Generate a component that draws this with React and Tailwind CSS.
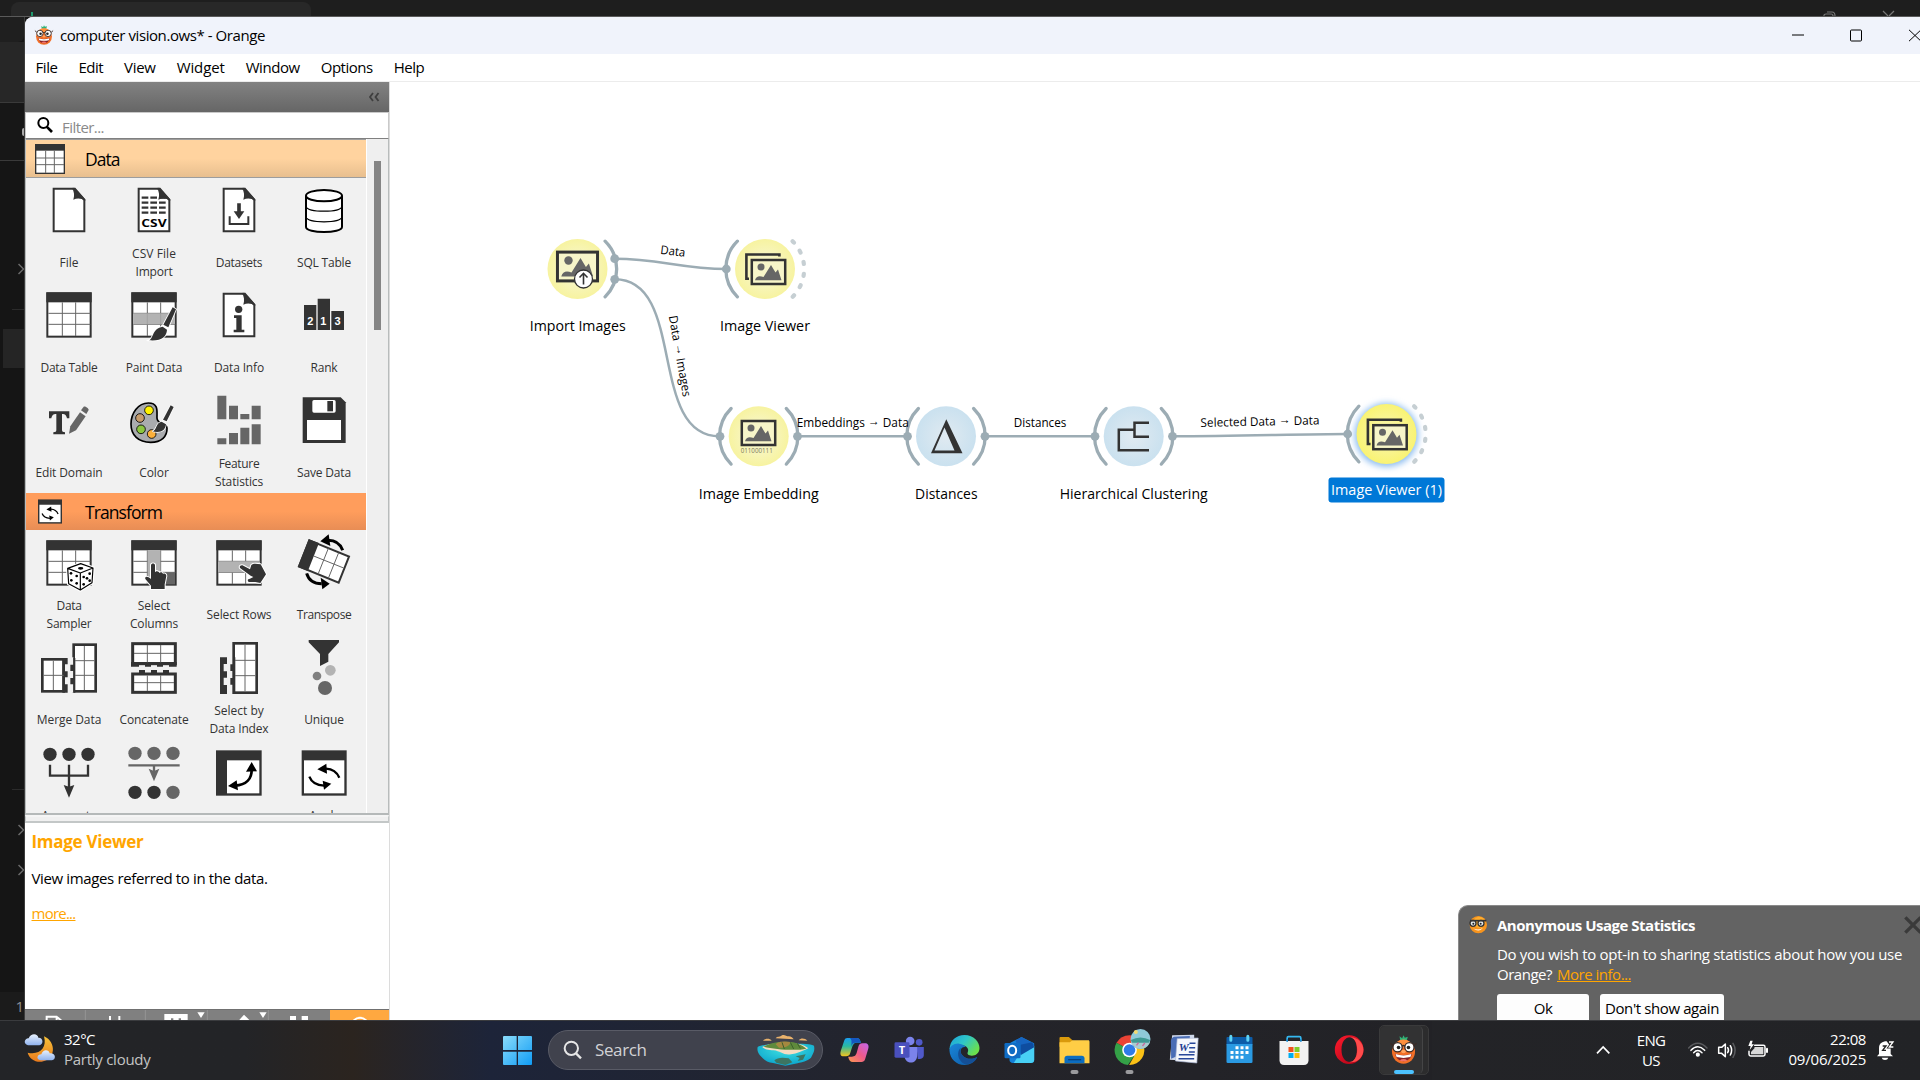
import { useLayoutEffect, useRef, useState } from "react";

// Text run whose letter spacing is tuned so that it spans `w` pixels.
function T({ w, className = "", children }) {
  const ref = useRef(null);
  const [ls, setLs] = useState(0);
  useLayoutEffect(() => {
    const natural = ref.current.getBoundingClientRect().width;
    setLs((w - natural) / String(children).length);
  }, [w, children]);
  return (
    <span ref={ref} className={"inline-block whitespace-nowrap " + className} style={{ letterSpacing: ls }}>
      {children}
    </span>
  );
}

const D = "#333333";
const G = "#666666";

function Icon({ x, y, children }) {
  return (
    <svg viewBox={`${x} ${y} 240 180`} className="mt-[2px] h-[60px] w-[80px] shrink-0">
      {children}
    </svg>
  );
}

function Doc({ x = 0, y = 0, children }) {
  return (
    <>
      <g transform={`translate(${x} ${y})`}>
        <path d="M101 56H162L193 90V184H101Z" fill="#fff" stroke={D} strokeWidth="6" />
        <path d="M155 54C163 64 164 76 160 89C172 83 185 85 196 92V88L166 53Z" fill={D} />
      </g>
      {children}
    </>
  );
}

function Table({ x = 0, y = 0, children }) {
  return (
    <>
      <g transform={`translate(${x} ${y})`}>
        <rect x="82" y="370" width="130" height="130" fill="#fff" stroke={D} strokeWidth="6" />
        <rect x="79" y="367" width="136" height="30" fill={D} />
        <path d="M127 397V498M167 397V498M85 430H211M85 463H211" stroke={G} strokeWidth="3" />
      </g>
      {children}
    </>
  );
}

const Brush = () => (
  <>
    <path d="M458 412L468 418L445 472L430 464Z" fill={D} stroke="#fff" strokeWidth="5" paintOrder="stroke" />
    <path d="M428 470L441 479C440 500 425 514 387 511C402 504 396 475 428 470Z" fill={D} stroke="#fff" strokeWidth="5" paintOrder="stroke" />
  </>
);

const Cycle = () => (
  <>
    <path d="M868 875C875 893 890 901 912 902" fill="none" stroke="#000" strokeWidth="7" />
    <path d="M908 887L934 896L912 914Z" fill="#000" />
    <path d="M958 878C950 860 938 852 918 851" fill="none" stroke="#000" strokeWidth="7" />
    <path d="M919 836L892 853L921 866Z" fill="#000" />
  </>
);

const dataItems = [
  { l: [["File", 19]], i: <Icon x={27} y={30}><Doc /></Icon> },
  {
    l: [["CSV File", 44], ["Import", 37]],
    i: (
      <Icon x={282} y={30}>
        <Doc x={255}>
          <path d="M365 83H437M365 98H437M365 113H437M365 128H437" stroke={D} strokeWidth="7" strokeDasharray="20 6" />
          <text x="364" y="171" textLength="76" lengthAdjust="spacingAndGlyphs" fontSize="34" fontWeight="700" fontFamily="Open Sans, sans-serif">CSV</text>
        </Doc>
      </Icon>
    ),
  },
  {
    l: [["Datasets", 46.5]],
    i: (
      <Icon x={537} y={30}>
        <Doc x={510}>
          <path d="M657 100V128" stroke={D} strokeWidth="11" />
          <path d="M641 124H673L657 147Z" fill={D} />
          <path d="M629 139V162H685V139" fill="none" stroke={D} strokeWidth="6" />
        </Doc>
      </Icon>
    ),
  },
  {
    l: [["SQL Table", 54]],
    i: (
      <Icon x={792} y={30}>
        <path d="M858 77V171C858 191 966 191 966 171V77" fill="#fff" />
        <g fill="none" stroke="#000">
          <ellipse cx="912" cy="77" rx="54" ry="17" strokeWidth="6" fill="#fff" />
          <path d="M858 77V171C858 191 966 191 966 171V77" strokeWidth="6" />
          <path d="M858 110C866 128 958 128 966 110M858 142C866 160 958 160 966 142" strokeWidth="3.5" />
        </g>
      </Icon>
    ),
  },
  { l: [["Data Table", 57]], i: <Icon x={27} y={345}><Table /></Icon> },
  {
    l: [["Paint Data", 56.5]],
    i: (
      <Icon x={282} y={345}>
        <Table x={255}>
          <rect x="340" y="430" width="124" height="33" fill="#b3b3b3" />
          <path d="M382 430V463M422 430V463" stroke="#999" strokeWidth="2" />
          <Brush />
        </Table>
      </Icon>
    ),
  },
  {
    l: [["Data Info", 50]],
    i: (
      <Icon x={537} y={345}>
        <Doc x={510} y={315}>
          <circle cx="656" cy="418" r="11" fill={D} />
          <path d="M642 436H665V479H673V487H641V479H649V444H642Z" fill={D} />
        </Doc>
      </Icon>
    ),
  },
  {
    l: [["Rank", 27]],
    i: (
      <Icon x={792} y={345}>
        <path d="M852 405H889V480H852ZM893 386H930V480H893ZM934 423H972V480H934Z" fill={D} />
        <g fill="#fff" fontSize="33" fontWeight="700" fontFamily="Liberation Sans, sans-serif" textAnchor="middle">
          <text x="871" y="466">2</text>
          <text x="910" y="466">1</text>
          <text x="953" y="466">3</text>
        </g>
      </Icon>
    ),
  },
  {
    l: [["Edit Domain", 67]],
    i: (
      <Icon x={27} y={660}>
        <path d="M87 724H148V745H141C139 736 136 732 126 732V780C126 785 129 786 135 787V793H100V787C107 786 109 785 109 780V732C99 732 96 736 94 745H87Z" fill={D} />
        <path d="M151 769L180 727L197 739L168 781L147 791Z" fill={G} />
        <path d="M183 721L191 710C194 707 207 715 206 720L199 732Z" fill={G} />
      </Icon>
    ),
  },
  {
    l: [["Color", 29.5]],
    i: (
      <Icon x={282} y={660}>
        <path d="M385 699C354 699 333 730 333 762C333 796 355 817 392 817C425 817 442 799 441 775C440 755 412 765 411 745C410 727 418 699 385 699Z" fill="#a9abae" stroke="#000" strokeWidth="5" />
        <g stroke="#000" strokeWidth="2.5">
          <circle cx="387" cy="721" r="13" fill="#fff200" />
          <circle cx="360" cy="744" r="13" fill="#c69c6d" />
          <circle cx="363" cy="778" r="13" fill="#8cc63f" />
          <circle cx="395" cy="792" r="13" fill="#fbb03b" />
        </g>
        <path d="M452 706L461 711L440 754L429 749Z" fill={D} stroke="#fff" strokeWidth="4" paintOrder="stroke" />
        <path d="M425 755L438 763C436 782 422 790 397 784C412 780 406 758 425 755Z" fill={D} stroke="#fff" strokeWidth="4" paintOrder="stroke" />
      </Icon>
    ),
  },
  {
    l: [["Feature", 40.7], ["Statistics", 48]],
    i: (
      <Icon x={537} y={660}>
        <path d="M592 677H619V748H592ZM627 707H654V748H627ZM661 732H688V748H661ZM695 707H722V748H695ZM592 805H619V823H592ZM627 789H654V823H627ZM661 773H688V823H661ZM695 763H722V823H695Z" fill={G} />
      </Icon>
    ),
  },
  {
    l: [["Save Data", 54]],
    i: (
      <Icon x={792} y={660}>
        <path d="M848 682H962L977 697V819H848Z" fill={D} />
        <rect x="877" y="690" width="70" height="38" rx="5" fill="#fff" />
        <rect x="922" y="693" width="17" height="31" fill={D} />
        <rect x="861" y="750" width="102" height="60" fill="#fff" />
      </Icon>
    ),
  },
];

const transformItems = [
  {
    l: [["Data", 25], ["Sampler", 45]],
    i: (
      <Icon x={27} y={141}>
        <Table y={-201}>
          <path d="M182 236L219 249L216 293L181 315L146 296L143 250Z" fill="#fff" stroke="#fff" strokeWidth="10" />
          <path d="M182 236L219 249L216 293L181 315L146 296L143 250Z M143 250L181 264L219 249M181 264V315" fill="#fff" stroke="#000" strokeWidth="3.5" strokeLinejoin="round" />
          <g fill="#000">
            <ellipse cx="182" cy="250" rx="8" ry="4" />
            <circle cx="153" cy="265" r="4" /><circle cx="170" cy="273" r="4" /><circle cx="154" cy="286" r="4" /><circle cx="170" cy="295" r="4" />
            <circle cx="191" cy="276" r="4" /><circle cx="209" cy="266" r="4" /><circle cx="201" cy="280" r="4" /><circle cx="191" cy="298" r="4" /><circle cx="209" cy="287" r="4" />
          </g>
        </Table>
      </Icon>
    ),
  },
  {
    l: [["Select", 32.5], ["Columns", 48]],
    i: (
      <Icon x={282} y={141}>
        <Table x={255} y={-201}>
          <rect x="383" y="196" width="38" height="101" fill="#b3b3b3" />
          <rect x="423" y="262" width="42" height="36" fill={G} />
          <path d="M393 241C393 234 405 234 405 241V262C408 256 417 258 418 264C422 260 428 262 429 267C434 264 439 267 439 273L434 298V312H393V302L376 282C374 274 382 272 393 282Z" fill={D} stroke="#fff" strokeWidth="6" paintOrder="stroke" />
        </Table>
      </Icon>
    ),
  },
  {
    l: [["Select Rows", 65]],
    i: (
      <Icon x={537} y={141}>
        <Table x={510} y={-201}>
          <rect x="595" y="229" width="124" height="33" fill="#b3b3b3" />
          <path d="M661 250C656 244 663 238 670 242L690 253L694 240C700 234 710 236 722 238L738 268L721 294L706 291H686C681 287 683 281 690 281L700 276L692 272Z" fill={D} stroke="#fff" strokeWidth="6" paintOrder="stroke" />
        </Table>
      </Icon>
    ),
  },
  {
    l: [["Transpose", 54.5]],
    i: (
      <Icon x={792} y={141}>
        <path d="M868 166L987 215L956 293L837 244Z" fill="#fff" stroke={D} strokeWidth="6" />
        <path d="M868 166L893 176L862 254L837 244Z" fill={D} stroke={D} strokeWidth="6" />
        <path d="M925 190L894 268M956 203L925 280M881 213L971 249" stroke={G} strokeWidth="3" />
        <path d="M968 196C960 174 945 166 924 166" fill="none" stroke="#000" strokeWidth="9" />
        <path d="M926 148L901 169L931 183Z" fill="#000" />
        <path d="M860 265C866 286 880 296 905 296" fill="none" stroke="#000" strokeWidth="9" />
        <path d="M902 278L929 296L907 313Z" fill="#000" />
      </Icon>
    ),
  },
  {
    l: [["Merge Data", 64.5]],
    i: (
      <Icon x={27} y={456}>
        <rect x="67" y="523" width="64" height="96" fill="#fff" stroke={D} strokeWidth="8" />
        <path d="M127 519H143V538H134V559H143V577H134V598H143V623H127Z" fill={D} />
        <path d="M100 527V615M71 571H131" stroke={G} strokeWidth="3" />
        <rect x="161" y="479" width="66" height="140" fill="#fff" stroke={D} strokeWidth="8" />
        <path d="M155 517H160V623H155Z" fill="#f1f1f1" />
        <path d="M160 519h6v104h-6v-25h-9v-19h9v-21h-9v-19h9z" fill={D} />
        <path d="M193 483V615M165 527H224M165 571H224" stroke={G} strokeWidth="3" />
      </Icon>
    ),
  },
  {
    l: [["Concatenate", 69]],
    i: (
      <Icon x={282} y={456}>
        <rect x="338" y="476" width="128" height="60" fill="#fff" stroke={D} strokeWidth="9" />
        <path d="M333 531H470V545H447V536H429V545H411V536H393V545H375V536H357V545H333Z" fill={D} />
        <path d="M382 480V532M422 480V532M342 505H462" stroke={G} strokeWidth="3" />
        <rect x="338" y="567" width="128" height="55" fill="#fff" stroke={D} strokeWidth="9" />
        <path d="M357 555h18v10h-18zM393 555h18v10h-18zM429 555h18v10h-18z" fill={D} />
        <path d="M382 571V618M422 571V618M342 593H462" stroke={G} strokeWidth="3" />
      </Icon>
    ),
  },
  {
    l: [["Select by", 49.5], ["Data Index", 59]],
    i: (
      <Icon x={537} y={456}>
        <path d="M600 517H621V537H611V559H621V578H611V600H621V627H600Z" fill={D} />
        <rect x="641" y="475" width="69" height="148" fill="#fff" stroke={D} strokeWidth="8" />
        <path d="M640 517h6v108h-6v-26h-9v-20h9v-21h-9v-20h9z" fill={D} />
        <path d="M675 479V619M645 526H706M645 572H706" stroke={G} strokeWidth="3" />
      </Icon>
    ),
  },
  {
    l: [["Unique", 39.5]],
    i: (
      <Icon x={792} y={456}>
        <path d="M866 465H957V472L925 507V530L900 543V507L866 472Z" fill={D} />
        <circle cx="931" cy="556" r="16" fill="#b3b3b3" />
        <circle cx="891" cy="573" r="13" fill="#808080" />
        <circle cx="915" cy="609" r="21" fill={G} />
      </Icon>
    ),
  },
  {
    l: [["Aggregate", 55], ["\u00a0", 4]],
    i: (
      <Icon x={27} y={771}>
        <g fill={D}>
          <circle cx="90" cy="808" r="20" /><circle cx="147" cy="808" r="20" /><circle cx="204" cy="808" r="20" />
          <path d="M131 900L147 905L163 900L147 938Z" />
        </g>
        <path d="M90 839V872H204V839M147 839V908" fill="none" stroke={D} strokeWidth="7" />
      </Icon>
    ),
  },
  {
    l: [],
    i: (
      <Icon x={282} y={771}>
        <g fill={G}>
          <circle cx="345" cy="805" r="20" /><circle cx="402" cy="805" r="20" /><circle cx="459" cy="805" r="20" /><circle cx="459" cy="922" r="20" />
          <path d="M386 851L402 858L418 851L402 889Z" />
        </g>
        <path d="M325 841H479M402 841V862" stroke={G} strokeWidth="7" />
        <circle cx="345" cy="922" r="20" fill={D} /><circle cx="402" cy="922" r="20" fill={D} />
      </Icon>
    ),
  },
  {
    l: [],
    i: (
      <Icon x={537} y={771}>
        <rect x="588" y="796" width="137" height="136" fill={D} />
        <rect x="621" y="826" width="97" height="99" fill="#fff" />
        <path d="M645 902C680 900 696 880 695 852" fill="none" stroke="#000" strokeWidth="8" />
        <path d="M650 886L624 903L654 916ZM678 860L695 831L711 859Z" fill="#000" />
      </Icon>
    ),
  },
  {
    l: [["Apply", 30], ["\u00a0", 4]],
    i: (
      <Icon x={792} y={771}>
        <rect x="845" y="796" width="135" height="136" fill={D} />
        <rect x="852" y="826" width="121" height="99" fill="#fff" />
        <Cycle />
      </Icon>
    ),
  },
];

function WidgetGrid({ items }) {
  return (
    <div className="grid w-[340px] grid-cols-4">
      {items.map((it, k) => (
        <div key={k} className="flex h-[105px] flex-col items-center overflow-visible">
          {it.i}
          <div className="mt-[4.5px] ml-px flex h-[36px] flex-col items-center justify-center text-[12px] leading-[17.5px] text-[#333]">
            {it.l.map(([t, w]) => (
              <T key={t} w={w}>{t}</T>
            ))}
          </div>
        </div>
      ))}
    </div>
  );
}

function Mascot({ className }) {
  return (
    <svg viewBox="0 0 80 88" className={className}>
      <path d="M28 4L36 10L40 1L44 8L53 5L50 17H30Z" fill="#2fb277" />
      <ellipse cx="40" cy="51" rx="35" ry="36" fill="#f26f27" />
      <path d="M12 38Q18 14 40 14Q62 14 68 38Z" fill="#ff8f3c" />
      <path d="M14 57Q40 66 66 57Q60 80 40 80Q20 80 14 57Z" fill="#8a2426" />
      <path d="M16 58Q40 67 64 58L61 67Q40 72 19 67Z" fill="#fff" />
      <path d="M28 77Q40 69 52 77Q40 83 28 77Z" fill="#f0726b" />
      <g fill="#fff" stroke="#3a2a26" strokeWidth="4">
        <circle cx="22" cy="37" r="14" /><circle cx="58" cy="37" r="14" />
      </g>
      <path d="M36 34Q40 30 44 34M8 32L0 25M72 32L80 25" stroke="#3a2a26" strokeWidth="4" fill="none" />
      <circle cx="25" cy="38" r="5.500" fill="#222" /><circle cx="55" cy="38" r="5.500" fill="#222" />
      <ellipse cx="40" cy="50" rx="7" ry="5" fill="#ffa25e" />
    </svg>
  );
}

function Sidebar() {
  return (
    <div className="flex w-[365px] shrink-0 flex-col border-r border-[#dcdcdc] bg-[#f1f1f1]">
      <div className="flex h-[30px] shrink-0 items-center justify-end bg-linear-to-b from-[#828282] to-[#666] pr-[9px]">
        <svg viewBox="0 0 12 10" className="h-[10px] w-[12px]" fill="none" stroke="#3f3f3f" strokeWidth="1.8">
          <path d="M5 1L2 5L5 9M10.500 1L7.500 5L10.500 9" />
        </svg>
      </div>
      <div className="flex h-[27px] shrink-0 items-center border border-[#c9c9c9] border-b-[#808080] bg-white pl-[11px]">
        <svg viewBox="0 0 48 48" className="mb-[2px] h-[16px] w-[16px]" fill="none" stroke="#000" strokeWidth="6">
          <circle cx="19" cy="18" r="15" />
          <path d="M29 29L45 45" strokeWidth="8" />
        </svg>
        <T w={42} className="mt-[3px] ml-[9px] text-[15px] leading-[20px] text-[#8a8a8a]">Filter...</T>
      </div>
      <div className="flex h-[676px] shrink-0 overflow-hidden border-r border-b-2 border-l border-[#b8bcbc] border-b-[#b5b9b9]">
        <div className="flex w-[340px] shrink-0 flex-col">
          <div className="flex h-[39px] shrink-0 items-center border-t border-b border-[#9d9d9d] bg-linear-to-b from-[#ffd39f] from-50% to-[#e8bf8f] pl-[9px]">
            <svg viewBox="0 0 90 90" className="h-[30px] w-[30px]">
              <rect x="2" y="2" width="86" height="86" fill="#fff" stroke={D} strokeWidth="4" />
              <rect width="90" height="20" fill={D} />
              <path d="M32 20V87M58 20V87M3 42H87M3 62H87" stroke={G} strokeWidth="3" />
            </svg>
            <T w={34.5} className="ml-[20px] text-[17.5px] leading-[24px]">Data</T>
          </div>
          <WidgetGrid items={dataItems} />
          <div className="flex h-[37px] shrink-0 items-center bg-linear-to-b from-[#ff9d5c] from-50% to-[#e88d55] pl-[12px]">
            <svg viewBox="845 796 135 136" className="h-[25px] w-[24px]">
              <rect x="845" y="796" width="135" height="136" fill={D} />
              <rect x="853" y="826" width="119" height="98" fill="#fff" />
              <Cycle />
            </svg>
            <T w={77} className="ml-[23px] text-[17.5px] leading-[24px]">Transform</T>
          </div>
          <WidgetGrid items={transformItems} />
        </div>
        <div className="w-[23px] shrink-0 border-l border-white bg-[#efefef] pt-[22px] pl-[7px]">
          <div className="h-[169px] w-[7px] bg-[#858585]" />
        </div>
      </div>
      <div className="h-[8px] shrink-0 border border-t-2 border-b-2 border-[#c3c7c7] border-t-[#f5f5f5] bg-[#f0f0f0]" />
      <div className="flex h-[186px] shrink-0 flex-col items-start bg-white pl-[6.5px]">
        <T w={112} className="mt-[6px] text-[17px] leading-[26px] font-bold text-[#ffa500]">Image Viewer</T>
        <T w={236} className="mt-[13px] text-[15px] leading-[20px]">View images referred to in the data.</T>
        <T w={44} className="mt-[15px] text-[15px] leading-[20px] text-[#ffa500] underline">more...</T>
      </div>
      <div className="flex h-[11px] shrink-0 overflow-hidden border-t border-[#707070] bg-[#808080]">
        <svg viewBox="75 630 915 30" className="h-[10px] w-[305px]" fill="none">
          <path d="M256 630V660M436 630V660M622 630V660M805 630V660" stroke="#949494" strokeWidth="3" />
          <path d="M140 662V650H170L185 663M170 648V662M330 648V662M358 648V662" stroke="#fff" strokeWidth="6" />
          <path d="M493 642H563V662H543V655H536V662H520V655H513V662H493ZM592 637H614L603 654ZM778 637H800L789 654ZM716 662L732 644L750 662ZM870 648H888V662H870ZM905 648H924V662H905Z" fill="#fff" />
        </svg>
        <svg viewBox="990 630 177 30" className="h-[10px] w-[59px] bg-[#ffa840]" fill="none">
          <circle cx="1080" cy="678" r="25" stroke="#fff" strokeWidth="6" />
        </svg>
      </div>
    </div>
  );
}

const LINK = "#9cacb4";

function Arc({ x, y, side = 1, dashed }) {
  const dx = 27.6 * side;
  return (
    <path
      d={`M${x + dx} ${y - 27.8}A39.200 39.200 0 0 ${side > 0 ? 1 : 0} ${x + dx} ${y + 27.8}`}
      fill="none"
      stroke={dashed ? "#c6cfd3" : LINK}
      strokeWidth={dashed ? 4.2 : 3.3}
      strokeLinecap="round"
      strokeDasharray={dashed ? "2 9.900" : undefined}
    />
  );
}

const Dot = ({ x, y }) => <circle cx={x} cy={y} r="4.4" fill={LINK} />;

// Framed landscape picture, drawn round (x, y).
function Picture({ x, y, s = 1 }) {
  return (
    <g transform={`translate(${x} ${y}) scale(${s})`}>
      <rect x="-16.700" y="-12" width="33.400" height="24" fill="#f7f5c9" stroke={D} strokeWidth="2.500" />
      <circle cx="-7.500" cy="-5" r="3.500" fill={G} />
      <path d="M-13.500 8.300C-12.500 4 -9 3.500 -5 5L2.500 -7L7 0.500L9.500 -2.500L13 8.300Z" fill={G} />
    </g>
  );
}

const Stack = ({ x, y }) => (
  <>
    <path d={`M${x - 16} ${y + 10.3}H${x - 18.6}V${y - 14}H${x + 14.4}V${y - 12}`} fill="none" stroke={D} strokeWidth="2.600" />
    <Picture x={x + 3.500} y={y + 3.500} />
  </>
);

function CT({ x, y, w, size = 15, rotate = 0, fill = "#000", children }) {
  const [from, to] = String(children).split("→");
  return (
    <text
      x={x - w / 2}
      y={y + size * 0.35}
      textLength={w}
      lengthAdjust="spacingAndGlyphs"
      fontSize={size}
      fill={fill}
      transform={`rotate(${rotate} ${x} ${y})`}
    >
      {from}
      {to && <tspan dy="-1.500">→</tspan>}
      {to && <tspan dy="1.500">{to}</tspan>}
    </text>
  );
}

function Canvas() {
  return (
    <svg viewBox="390 82 1530 938" className="h-[938px] w-[1530px]">
      <defs>
        <radialGradient id="yel"><stop offset="0" stopColor="#f8f8dc" /><stop offset="1" stopColor="#f7f3a0" /></radialGradient>
        <radialGradient id="sel"><stop offset="0" stopColor="#f8f6b8" /><stop offset="1" stopColor="#f9f373" /></radialGradient>
        <radialGradient id="blu"><stop offset="0" stopColor="#e0eaf1" /><stop offset="1" stopColor="#cae1ef" /></radialGradient>
        <filter id="glow" x="-50%" y="-50%" width="200%" height="200%"><feGaussianBlur stdDeviation="3" /></filter>
      </defs>

      <g fill="none" stroke={LINK} strokeWidth="2.500">
        <path d="M614.700 258.700C660 258.700 680 269 727 269" />
        <path d="M614.700 279.300C687 279.300 647 436.300 719.700 436.300" />
        <path d="M797.500 436.300H907.500M985 436.300H1095" />
        <path d="M1172.500 436.300C1240 436.300 1300 434 1347.500 434" />
      </g>

      <circle cx="577.500" cy="269" r="30" fill="url(#yel)" />
      <circle cx="765" cy="269" r="30" fill="url(#yel)" />
      <circle cx="758.700" cy="436.300" r="30" fill="url(#yel)" />
      <circle cx="946" cy="436.300" r="30" fill="url(#blu)" />
      <circle cx="1133.700" cy="436.300" r="30" fill="url(#blu)" />
      <circle cx="1386.500" cy="435" r="32" fill="#8dbdf0" filter="url(#glow)" />
      <circle cx="1386.500" cy="434" r="30" fill="url(#sel)" />

      <Arc x={577.5} y={269} />
      <Arc x={765} y={269} side={-1} />
      <Arc x={765} y={269} dashed />
      <Arc x={758.7} y={436.3} side={-1} />
      <Arc x={758.7} y={436.3} />
      <Arc x={946} y={436.3} side={-1} />
      <Arc x={946} y={436.3} />
      <Arc x={1133.7} y={436.3} side={-1} />
      <Arc x={1133.7} y={436.3} />
      <Arc x={1386.5} y={434} side={-1} />
      <Arc x={1386.5} y={434} dashed />

      <Dot x={614.7} y={258.7} /><Dot x={614.7} y={279.3} /><Dot x={726.3} y={269} />
      <Dot x={720} y={436.3} /><Dot x={797.5} y={436.3} /><Dot x={907.5} y={436.3} />
      <Dot x={985} y={436.3} /><Dot x={1095} y={436.3} /><Dot x={1172.5} y={436.3} /><Dot x={1347.7} y={434} />

      <Picture x={577.5} y={266.5} s={1.2} />
      <circle cx="583.500" cy="279" r="9" fill="#fff" stroke={D} strokeWidth="1.300" />
      <path d="M583.500 284.500V273.500M579.500 277.500L583.500 273.300L587.500 277.500" fill="none" stroke={D} strokeWidth="1.600" />
      <Stack x={765} y={268.5} />
      <Stack x={1386.5} y={433.7} />
      <Picture x={758.5} y={433} />
      <text x="740.700" y="452.500" textLength="32" lengthAdjust="spacingAndGlyphs" fontSize="6.500" fill="#77765a">011000111</text>
      <path fillRule="evenodd" d="M946.300 419.300L962.500 453.300H931ZM944.500 427.500L934.500 450.500H954.500Z" fill={D} />
      <path d="M1149 422.800H1134.500V436.700H1149M1134.500 429.800H1118.800V450.300H1149" fill="none" stroke={D} strokeWidth="2.500" />

      <CT x={577.7} y={325.5} w={96}>Import Images</CT>
      <CT x={765} y={325.5} w={90}>Image Viewer</CT>
      <CT x={758.7} y={493.5} w={120}>Image Embedding</CT>
      <CT x={946.3} y={493.5} w={62.5}>Distances</CT>
      <CT x={1133.7} y={493.5} w={148}>Hierarchical Clustering</CT>
      <rect x="1328.500" y="477.500" width="116" height="25" rx="3" fill="#0078d7" />
      <CT x={1386.5} y={490} w={111} fill="#fff">Image Viewer (1)</CT>

      <CT x={673} y={251} w={25} size={12} rotate={7}>Data</CT>
      <CT x={680} y={356} w={82} size={12} rotate={80}>Data → Images</CT>
      <CT x={852.7} y={422.5} w={112} size={12}>Embeddings → Data</CT>
      <CT x={1040} y={422.5} w={52.5} size={12}>Distances</CT>
      <CT x={1260} y={421.5} w={119} size={12} rotate={-1.2}>Selected Data → Data</CT>
    </svg>
  );
}

function Notification() {
  return (
    <div className="absolute right-0 bottom-0 flex h-[115px] w-[462px] items-start rounded-tl-[10px] border-t border-l border-[#8a8a8a] bg-[#636363] pt-[9px] pl-[10px] text-[15px] leading-[20px] text-white">
      <svg viewBox="0 0 57 57" className="h-[19px] w-[19px] shrink-0">
        <circle cx="28" cy="29" r="26" fill="#f7941d" />
        <circle cx="31" cy="22" r="17" fill="#ffad2e" />
        <circle cx="12" cy="25" r="9" fill="#dfe6ea" stroke="#333" strokeWidth="4" />
        <circle cx="36" cy="25" r="9" fill="#dfe6ea" stroke="#333" strokeWidth="4" />
        <path d="M3 17H52" stroke="#333" strokeWidth="5" />
        <circle cx="13" cy="26" r="3" fill="#222" /><circle cx="35" cy="26" r="3" fill="#222" />
        <path d="M12 40Q28 48 42 38Q30 54 12 40Z" fill="#fff" />
      </svg>
      <div className="ml-[9px] flex w-[407px] shrink-0 flex-col items-start">
        <T w={198} className="font-bold">Anonymous Usage Statistics</T>
        <T w={405} className="mt-[9px]">Do you wish to opt-in to sharing statistics about how you use</T>
        <div className="flex gap-[5px]">
          <T w={55}>Orange?</T>
          <T w={74} className="text-[#ffa500] underline">More info...</T>
        </div>
        <div className="mt-[10px] flex gap-[11px] text-black">
          <div className="flex h-[30px] w-[92px] justify-center rounded-[3px] bg-[#fdfdfd] pt-[4px]"><T w={18.5}>Ok</T></div>
          <div className="flex h-[30px] w-[124px] justify-center rounded-[3px] bg-[#fdfdfd] pt-[4px]"><T w={114}>Don't show again</T></div>
        </div>
      </div>
      <svg viewBox="0 0 54 54" className="mt-px h-[18px] w-[18px] shrink-0" stroke="#3a3a3a" strokeWidth="10">
        <path d="M4 4L50 50M50 4L4 50" />
      </svg>
    </div>
  );
}

function Cell({ x, children }) {
  return (
    <svg viewBox={`${x} 30 165 180`} className="h-[60px] w-[55px] shrink-0">
      {children}
    </svg>
  );
}

function Taskbar() {
  return (
    <div className="relative flex h-[60px] w-[1920px] shrink-0 items-center bg-linear-to-r from-[#232528] via-[#242428] to-[#222326] text-[15px] leading-[20px] text-white after:absolute after:inset-x-0 after:top-0 after:h-px after:bg-[#3a3b3e]">
      <div className="flex h-[60px] w-[490px] shrink-0 items-center bg-linear-to-r from-[#232427] from-50% via-[#2b241f] via-72% to-[#1d2439] pl-[20px]">
        <svg viewBox="60 660 120 180" className="h-[60px] w-[40px]">
          <defs>
            <linearGradient id="moon" x1="0" y1="0" x2="0" y2="1"><stop offset="0" stopColor="#f8c33a" /><stop offset="1" stopColor="#e87a1c" /></linearGradient>
            <linearGradient id="cloud" x1="0" y1="0" x2="0" y2="1"><stop offset="0" stopColor="#e8f1fd" /><stop offset="1" stopColor="#8fb2ee" /></linearGradient>
          </defs>
          <path d="M132 709C170 725 168 780 125 785C103 787 88 775 83 758C118 766 142 745 132 709Z" fill="url(#moon)" />
          <path d="M84 736C68 732 74 714 86 715C92 698 114 700 115 713C130 712 132 733 118 736Z" fill="url(#cloud)" />
          <path d="M122 781C107 778 111 763 124 763C129 746 147 748 149 760C168 758 169 779 156 781Z" fill="url(#cloud)" />
        </svg>
        <div className="ml-[4px] flex flex-col items-start pb-[2px]">
          <T w={31}>32°C</T>
          <T w={86.5} className="text-[#c4c4c4]">Partly cloudy</T>
        </div>
      </div>
      <div className="flex h-[60px] shrink-0 items-center bg-linear-to-r from-[#1d2439] via-[#24242a] to-[#222226]">
        <svg viewBox="30 30 165 180" className="h-[60px] w-[55px]">
          <defs><linearGradient id="win" x1="0" y1="0" x2="1" y2="1"><stop offset="0" stopColor="#8adcfb" /><stop offset="1" stopColor="#109cf5" /></linearGradient></defs>
          <path d="M71 78H110V120H69V80ZM114 78H154L156 80V120H114ZM69 125H110V165H71L69 163ZM114 125H156V163L154 165H114Z" fill="url(#win)" />
        </svg>
        <div className="mr-[3.5px] ml-[3px] flex h-[40px] w-[275px] items-center rounded-full border border-[#595b66] bg-[#40424d] pl-[14px]">
          <svg viewBox="0 0 60 60" className="h-[20px] w-[20px]" fill="none" stroke="#e6e6e6" strokeWidth="6">
            <circle cx="25" cy="25" r="20" /><path d="M39 40L54 55" strokeWidth="7" />
          </svg>
          <T w={51.5} className="ml-[12px] text-[17px] text-[#d2d2d5]">Search</T>
          <svg viewBox="830 70 174 102" className="ml-[110px] h-[34px] w-[58px]">
            <defs><radialGradient id="sea" cx=".5" cy=".3" r=".7"><stop offset="0" stopColor="#3fe0e0" /><stop offset="1" stopColor="#0aa2cc" /></radialGradient></defs>
            <path d="M832 112C840 100 990 98 1001 108C1004 122 1000 130 992 144C980 156 965 156 952 161L915 168L878 160C862 160 850 150 838 136C832 128 830 120 832 112Z" fill="url(#sea)" />
            <path d="M846 112C870 96 960 92 984 116C966 124 950 132 932 134C910 138 900 124 880 122C865 122 850 118 846 112Z" fill="#f3dcc2" />
            <path d="M850 111C864 104 880 96 908 97C945 94 962 106 978 117C950 124 885 120 850 111Z" fill="#5f8a3c" />
            <path d="M886 104C892 94 916 94 930 97C930 108 915 116 896 114Z" fill="#a5883f" />
            <path d="M905 98L912 118M930 98L940 118M950 100L960 116" stroke="#3c5f2c" strokeWidth="3" />
            <path d="M882 152Q895 140 925 146L936 158L915 166L888 159ZM946 140L976 134L968 150L952 154L958 145Z" fill="#3d7562" />
            <path d="M886 86C890 80 900 82 905 77C912 73 918 80 925 80C932 80 938 85 940 89ZM848 93C855 86 868 85 874 93ZM955 92C962 83 975 86 981 93Z" fill="#e9b26c" />
          </svg>
        </div>
        <Cell x={1039.5}>
          <defs>
            <linearGradient id="cpA" x1="0" y1="0" x2="0" y2="1"><stop offset="0" stopColor="#1a9df0" /><stop offset=".45" stopColor="#2bb9a0" /><stop offset="1" stopColor="#f5c51c" /></linearGradient>
            <linearGradient id="cpB" x1="1" y1="0" x2="0" y2="1"><stop offset="0" stopColor="#c267ee" /><stop offset=".5" stopColor="#ee5a8a" /><stop offset="1" stopColor="#fb9a4d" /></linearGradient>
          </defs>
          <path d="M1100 84H1128C1136 84 1139 89 1141 98H1128C1120 98 1117 104 1114 114L1109 130C1107 137 1103 139 1097 139H1089C1080 139 1078 132 1081 122L1091 92C1093 86 1096 84 1100 84Z" fill="url(#cpA)" />
          <path d="M1108 84H1128C1136 84 1139 89 1141 98H1126C1119 98 1115 100 1113 110C1112 98 1116 90 1108 84Z" fill="#1557c0" />
          <path d="M1143 156H1117C1109 156 1106 151 1103 140H1114C1123 140 1126 137 1129 127L1134 109C1136 103 1139 100 1146 100H1154C1163 100 1166 108 1163 117L1154 147C1152 154 1148 156 1143 156Z" fill="url(#cpB)" />
        </Cell>
        <Cell x={1204.5}>
          <circle cx="1316" cy="97" r="10" fill="#5059c9" />
          <path d="M1308 111H1330V134C1330 144 1322 148 1312 147Z" fill="#5059c9" />
          <circle cx="1289" cy="93" r="13" fill="#7b83eb" />
          <path d="M1272 111H1310V138C1308 164 1276 164 1272 140Z" fill="#7b83eb" />
          <rect x="1242" y="97" width="45" height="46" rx="4" fill="#4a50bd" />
          <text x="1264.500" y="132" textAnchor="middle" fontSize="33" fontWeight="700" fill="#fff">T</text>
        </Cell>
        <Cell x={1369.5}>
          <defs>
            <linearGradient id="edA" x1="0" y1="0" x2="1" y2=".6"><stop offset="0" stopColor="#1ba0dc" /><stop offset=".5" stopColor="#2fc6c8" /><stop offset="1" stopColor="#6be04c" /></linearGradient>
            <linearGradient id="edB" x1="0" y1="0" x2="1" y2="1"><stop offset="0" stopColor="#1a86d9" /><stop offset="1" stopColor="#0c59a4" /></linearGradient>
          </defs>
          <path d="M1407 118C1408 91 1428 75 1452 75C1480 75 1497 96 1497 114C1497 130 1485 137 1474 137C1463 137 1459 132 1462 126C1466 117 1458 106 1443 106C1425 104 1412 112 1407 118Z" fill="url(#edA)" />
          <path d="M1407 122C1406 108 1422 99 1436 101C1446 103 1452 106 1456 111C1440 108 1437 124 1444 134C1454 148 1475 150 1490 141C1484 157 1468 165 1452 165C1427 165 1408 145 1407 122Z" fill="url(#edB)" />
          <path d="M1441 113C1428 124 1430 150 1452 162C1468 164 1484 156 1490 141C1475 150 1454 148 1444 134C1440 128 1439 120 1441 113Z" fill="#144f96" />
        </Cell>
        <Cell x={94.5}>
          <path d="M147 100L183 81L221 100V150C221 156 217 159 211 159H157C151 159 147 155 147 150Z" fill="#1480d8" />
          <path d="M165 92L183 81L221 102L205 126L180 128Z" fill="#1664c0" />
          <path d="M221 107V150C221 156 217 159 211 159H160L175 135Z" fill="#48d0f5" />
          <path d="M180 104L215 97L221 112L180 136Z" fill="#0e4da0" />
          <rect x="132" y="99" width="48" height="46" rx="4" fill="#0f6cc4" />
          <ellipse cx="155" cy="121.500" rx="12" ry="14" fill="none" stroke="#fff" strokeWidth="6" />
        </Cell>
        <Cell x={259.5}>
          <path d="M297 84C297 82 299 81 301 81H325L336 91V110H297Z" fill="#d99a0c" />
          <path d="M297 97H328L336 91H383C386 91 387 93 387 96V160H297Z" fill="#ffcd45" />
          <path d="M312 160V145C312 140 315 137 320 137H364C369 137 372 140 372 145V160Z" fill="#0c6dc0" />
          <path d="M323 149H362" stroke="#07427e" strokeWidth="4" />
          <rect x="330" y="180" width="24" height="12" rx="6" fill="#9b9b9e" />
        </Cell>
        <Cell x={424.5}>
          <path d="M507 120L468 98A45 45 0 0 1 546 98Z" fill="#ea4335" />
          <path d="M507 120L468 98A45 45 0 0 0 502 165L526 131Z" fill="#34a047" />
          <path d="M507 100H547A45 45 0 0 1 506 165L526 130Z" fill="#fbc116" />
          <circle cx="507" cy="120" r="22" fill="#fff" /><circle cx="507" cy="120" r="17.500" fill="#2f7be8" />
          <circle cx="540" cy="87" r="30" fill="#8fc9d9" />
          <path d="M511 90Q540 75 569 90L560 109Q540 125 520 109Z" fill="#3f9a94" />
          <path d="M513 98H567Q560 116 540 117Q520 116 513 98Z" fill="#aacbd0" />
          <circle cx="526" cy="66" r="6" fill="#f4d870" />
          <path d="M528 106L534 98M546 108L553 99" stroke="#c56ea0" strokeWidth="4" />
          <rect x="495" y="180" width="24" height="12" rx="6" fill="#9b9b9e" />
        </Cell>
        <Cell x={589.5}>
          <path d="M635 76L701 74V154L628 149Z" fill="#cfd8ea" />
          <path d="M640 80L688 78C690 110 665 135 632 146L631 92Q632 83 640 80Z" fill="#4a6db5" />
          <path d="M650 86L713 84L709 159L645 153Z" fill="#f6f8fc" stroke="#aab7d4" strokeWidth="2" />
          <path d="M687 100H705M686 113H704M685 126H703M655 134H702M654 146H701" stroke="#27479a" strokeWidth="4.500" />
          <text x="655" y="122" fontSize="34" fontWeight="700" fontStyle="italic" fontFamily="Liberation Serif, serif" fill="#1d3c90">W</text>
        </Cell>
        <Cell x={754.5}>
          <path d="M798 84Q798 81 801 81H873Q876 81 876 84V104H798Z" fill="#0c5ca8" />
          <path d="M798 102H876V155Q876 159 872 159H802Q798 159 798 155Z" fill="#2a9ae3" />
          <path d="M811 79V91M862 79V91" stroke="#5fd4f5" strokeWidth="9" strokeLinecap="round" />
          <path d="M825 113H864M810 127.500H864M810 142H849" stroke="#fff" strokeWidth="9" strokeDasharray="9 6" />
        </Cell>
        <Cell x={919.5}>
          <path d="M980 95V84Q980 80 984 80H1017Q1021 80 1021 84V95" fill="none" stroke="#35b8f0" strokeWidth="5" />
          <path d="M957 93H1044V151Q1044 165 1030 165H971Q957 165 957 151Z" fill="#f2f2f2" />
          <path d="M980 95V88M1021 95V88" stroke="#1488cf" strokeWidth="5" />
          <rect x="984" y="111" width="15" height="15" fill="#f1511b" /><rect x="1002" y="111" width="15" height="15" fill="#80cc28" />
          <rect x="984" y="129" width="15" height="15" fill="#00adef" /><rect x="1002" y="129" width="15" height="15" fill="#fbbc09" />
        </Cell>
        <Cell x={1084.5}>
          <defs><linearGradient id="op" x1="0" y1="0" x2="1" y2="1"><stop offset="0" stopColor="#ff1b2d" /><stop offset="1" stopColor="#a70014" /></linearGradient></defs>
          <path fillRule="evenodd" d="M1166 76A43 43 0 1 0 1166 162A43 43 0 1 0 1166 76ZM1169 82C1181 82 1189 98 1189 119C1189 140 1181 156 1169 156C1154 156 1143 142 1143 119C1143 96 1154 82 1169 82Z" fill="url(#op)" />
          <path d="M1166 82C1185 78 1209 95 1209 119C1209 143 1187 161 1166 156C1181 156 1190 140 1190 119C1190 98 1181 82 1166 82Z" fill="#ff4b4b" />
        </Cell>
        <div className="flex h-[60px] w-[55px] items-center justify-center">
          <div className="flex h-[50px] w-[50px] rounded-[5px] border border-[#3a3a3b] bg-[#2c2c2d]">
            <div className="flex h-[48px] w-[43px] flex-col items-center rounded-[5px] border-r border-[#454546] bg-[#323233] pt-[9px] pl-[5px]">
              <Mascot className="h-[29px] w-[27px] shrink-0" />
              <div className="mt-[6px] h-[4px] w-[20px] shrink-0 rounded-full bg-[#4cc2ff]" />
            </div>
          </div>
        </div>
      </div>
      <svg viewBox="420 390 135 180" className="ml-[148.5px] h-[60px] w-[45px] shrink-0" fill="none" stroke="#fff" strokeWidth="5">
        <path d="M471 490L489.500 471L508 490" />
      </svg>
      <div className="flex w-[52px] shrink-0 flex-col items-center pb-px">
        <T w={28.5}>ENG</T>
        <T w={18}>US</T>
      </div>
      <svg viewBox="720 390 285 180" className="ml-[3px] h-[60px] w-[95px] shrink-0" fill="none" stroke="#fff" strokeWidth="4.500" strokeLinecap="round">
        <path d="M746 474Q773 446 801 474" stroke="#5a5b5e" />
        <path d="M753 481Q773 460 794 481M761 488Q773 475 786 488" />
        <circle cx="773.500" cy="494" r="4" fill="#fff" />
        <path d="M836 472H845L856 462V500L845 490H836Z" strokeLinejoin="round" />
        <path d="M863 473Q868 481 863 488M871 467Q879 481 871 495" />
        <path d="M879 460Q892 481 879 502" stroke="#5a5b5e" />
        <path d="M944 466H970Q975 466 975 471V493Q975 498 970 498H932Q927 498 927 493V484" />
        <path d="M943 471H970V493H933V486L944 474Z" fill="#d8d8d8" stroke="none" />
        <path d="M981 476V486" strokeWidth="6" />
        <path d="M931 452L925 468H932L929 480L942 463H935L938 452Z" fill="#fff" stroke="none" />
      </svg>
      <div className="flex w-[91px] shrink-0 flex-col items-end pb-[2px]">
        <T w={36}>22:08</T>
        <T w={77.5}>09/06/2025</T>
      </div>
      <svg viewBox="1296 390 90 180" className="ml-[6px] h-[60px] w-[30px] shrink-0" fill="#fff">
        <path d="M1317 492V475C1317 460 1327 454 1340 454L1352 470V492L1359 499H1311ZM1325 503H1345Q1343 510 1335 510Q1327 510 1325 503Z" />
        <path d="M1328 468H1338L1328 481H1338" fill="none" stroke="#222" strokeWidth="4" />
        <path d="M1347 456H1359L1348 471H1360" fill="none" stroke="#222" strokeWidth="9" />
        <path d="M1347 456H1359L1348 471H1360" fill="none" stroke="#fff" strokeWidth="4" />
      </svg>
    </div>
  );
}

const Chevron = ({ className }) => (
  <svg viewBox="0 0 6 12" className={"h-[12px] w-[6px] shrink-0 self-end " + className} fill="none" stroke="#6b6b6b" strokeWidth="1.500">
    <path d="M0.500 1L5.500 6L0.500 11" />
  </svg>
);

const menus = [["File", 22], ["Edit", 24.5], ["View", 31.7], ["Widget", 48], ["Window", 54], ["Options", 52], ["Help", 30.5]];

export default function App() {
  return (
    <div className="flex h-[1080px] w-[1920px] flex-col overflow-hidden bg-[#171717] font-['Open_Sans',sans-serif] text-black">
      <div className="flex h-[17px] shrink-0 items-end border-b border-[#5a5a5a] bg-[#1e1e1e] pl-[11px]">
        <div className="flex h-[14px] w-[300px] shrink-0 items-end rounded-t-[8px] bg-[#282828] pl-[20px]">
          <div className="h-[4px] w-[2px] bg-[#1f9a6f]" />
        </div>
        <svg viewBox="0 0 72 6" className="ml-[1512px] h-[6px] w-[72px] shrink-0" fill="none" stroke="#767676" strokeWidth="1.200">
          <path d="M1 6V5Q1 4 3 4H8Q10 4 10 6M4 2H9Q12 2 12 6M60 1L65 6M71 1L66 6" />
        </svg>
      </div>
      <div className="flex h-[1003px] shrink-0">
        <div className="flex w-[25px] shrink-0 flex-col border-r border-[#3c3c3c] bg-[#151515]">
          <div className="h-[25px] shrink-0 rounded-br-[6px] bg-[#1f1f1f]" />
          <div className="h-[60px] shrink-0 bg-[#272727]" />
          <div className="flex h-[59px] shrink-0 items-center justify-end border-t border-b border-[#3a3a3a] bg-[#171717]">
            <div className="h-[8px] w-[2px] rounded-l bg-[#aaa]" />
          </div>
          <Chevron className="mt-[102px]" />
          <div className="mt-[34px] ml-[12px] h-px shrink-0 bg-[#2b2b2b]" />
          <div className="mt-[19px] ml-[3px] h-[39px] shrink-0 bg-[#252525]" />
          <div className="mt-[421px] ml-[12px] h-px shrink-0 bg-[#2b2b2b]" />
          <Chevron className="mt-[34px]" />
          <Chevron className="mt-[28px]" />
          <div className="mt-[116px] flex h-[29px] shrink-0 items-center justify-end bg-[#1b1b1b] pb-[2px] text-[15px] leading-[20px] text-[#8f8f94]">1</div>
        </div>
        <div className="relative flex w-[1895px] shrink-0 flex-col overflow-hidden rounded-tl-[8px] bg-white">
          <div className="flex h-[37px] shrink-0 items-center bg-[#f0f3fb] pb-[2px] pl-[9px]">
            <Mascot className="h-[20px] w-[20px] shrink-0" />
            <T w={205} className="ml-[6px] text-[15px] leading-[20px]">computer vision.ows* - Orange</T>
            <svg viewBox="690 80 390 50" className="mt-px ml-[1525px] h-[17px] w-[130px] shrink-0" fill="none" stroke="#000" strokeWidth="3">
              <path d="M696 103.500H732M1047 88L1083 122M1083 88L1047 122" />
              <rect x="871.500" y="88.500" width="33" height="33" rx="3" />
            </svg>
          </div>
          <div className="flex h-[28px] shrink-0 items-center gap-[21px] border-b border-[#ececec] pb-[2px] pl-[10.5px] text-[15px] leading-[20px]">
            {menus.map(([t, w]) => (
              <T key={t} w={w}>{t}</T>
            ))}
          </div>
          <div className="flex h-[938px] shrink-0">
            <Sidebar />
            <Canvas />
          </div>
          <Notification />
        </div>
      </div>
      <Taskbar />
    </div>
  );
}
